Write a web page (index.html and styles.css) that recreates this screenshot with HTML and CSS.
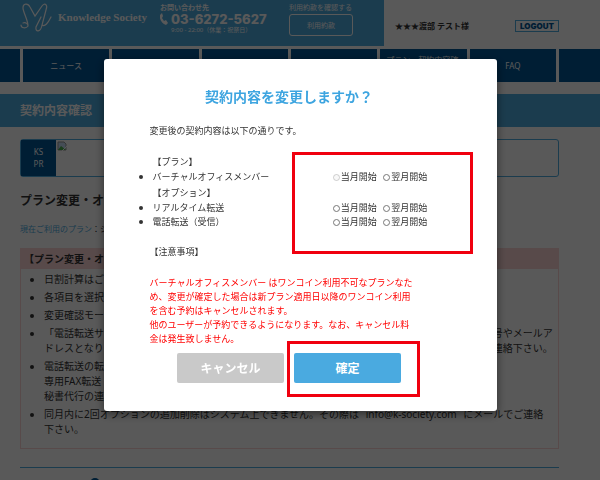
FILE: index.html
```
<!DOCTYPE html>
<html lang="ja">
<head>
  <meta charset="UTF-8" />
  <meta name="viewport" content="width=device-width, initial-scale=1.0"/>
  <title>契約内容確認 | Knowledge Society</title>
  <link rel="stylesheet" href="styles.css">
</head>
<body>

  <header class="header">
    <div class="header-main">
      <a class="logo" href="#">
        <svg width="34" height="30" viewBox="0 0 34 30" fill="none" stroke="#fff" stroke-width="1.2" stroke-linecap="round">
          <path d="M1 22c0 3 5 4 7 1C8 17 3 9 3 5c0-5 5-5 7-1l5 9 7-10c3-4 6-1 4 4l-4 15c-1 7-7 8-6 2l5-10M3 20c3-1 5 1 5 3M22 22c3 2 6-2 9-8"/>
        </svg>
        <span class="logo-text">Knowledge Society</span>
      </a>
      <div class="contact">
        <p class="contact-label">お問い合わせ先</p>
        <p class="contact-tel">
          <svg width="8" height="12" viewBox="0 0 8 12" fill="#fff"><path d="M2 0 0 2c-1 4 2 9 6 10l2-2-2-3-2 1-2-3 1-2z"/></svg>
          03-6272-5627
        </p>
        <p class="contact-hours">9:00 - 22:00（休業：祝祭日）</p>
      </div>
      <div class="terms">
        <p>利用約款を確認する</p>
        <button type="button" class="terms-btn">利用約款</button>
      </div>
    </div>
    <div class="header-user">
      <span>★★★渡部 テスト様</span>
      <a class="logout" href="#">LOGOUT</a>
    </div>
  </header>

  <nav class="nav">
    <span></span>
    <a href="#">ニュース</a>
    <a href="#"></a>
    <a href="#"></a>
    <a href="#"></a>
    <a href="#">プラン・契約内容確認</a>
    <a href="#">FAQ</a>
    <span></span>
  </nav>

  <h1 class="page-title">契約内容確認</h1>

  <main class="content">
    <div class="pr">
      <div class="pr-label">KS<br>PR</div>
      <div class="pr-body">
        <svg width="10" height="10" viewBox="0 0 10 10">
          <path d="M1 1h6l2 2v6H1z" fill="#c5dcf5" stroke="#999"/>
          <path d="M1 9l3-4 5 4z" fill="#4caf50"/>
          <path d="M5 10 10 5" stroke="#fff"/>
        </svg>
      </div>
    </div>

    <h2>プラン変更・オプション</h2>
    <p class="current"><span>現在ご利用のプラン</span>：シェア</p>

    <section class="notice">
      <h3>【プラン変更・オプション】</h3>
      <ul>
        <li>日割計算はございません。</li>
        <li>各項目を選択してください。</li>
        <li>変更確認モーダルが表示されます。</li>
        <li>「電話転送サービス」をお申込みの場合は、当社より転送先のご確認をいたします。ご登録の電話番号やメールア<br>ドレスとなりますので、変更をご希望の場合はお手数ですが下記メールアドレスまで内容を添えてご連絡下さい。</li>
        <li>電話転送の転送先<br>専用FAX転送<br>秘書代行の連絡先</li>
        <li>同月内に2回オプションの追加削除はシステム上できません。その際は <span class="mail">info@k-society.com</span> にメールでご連絡<br>下さい。</li>
      </ul>
    </section>

    <section class="step">
      <span class="step-mark"></span>
    </section>
  </main>

  <div class="overlay">
    <form class="modal">
      <h2 class="modal-title">契約内容を変更しますか？</h2>
      <p>変更後の契約内容は以下の通りです。</p>

      <div class="plans">
        <p class="plans-head">【プラン】</p>
        <ul>
          <li>
            <span class="plan-name">バーチャルオフィスメンバー</span>
            <label><input type="radio" name="plan" disabled>当月開始</label>
            <label><input type="radio" name="plan">翌月開始</label>
          </li>
        </ul>
        <p class="plans-head">【オプション】</p>
        <ul>
          <li>
            <span class="plan-name">リアルタイム転送</span>
            <label><input type="radio" name="realtime">当月開始</label>
            <label><input type="radio" name="realtime">翌月開始</label>
          </li>
          <li>
            <span class="plan-name">電話転送（受信）</span>
            <label><input type="radio" name="tel">当月開始</label>
            <label><input type="radio" name="tel">翌月開始</label>
          </li>
        </ul>
        <span class="mark mark-plans"></span>
      </div>

      <p>【注意事項】</p>
      <p class="warning">バーチャルオフィスメンバー はワンコイン利用不可なプランなた<br>め、変更が確定した場合は新プラン適用日以降のワンコイン利用<br>を含む予約はキャンセルされます。<br>他のユーザーが予約できるようになります。なお、キャンセル料<br>金は発生致しません。</p>

      <div class="buttons">
        <button type="button" class="btn btn-cancel">キャンセル</button>
        <div class="confirm">
          <button type="button" class="btn btn-confirm">確定</button>
          <span class="mark mark-confirm"></span>
        </div>
      </div>
    </form>
  </div>

</body>
</html>
```
FILE: styles.css
```
* {
  box-sizing: border-box;
}

body {
  margin: 0;
  height: 100vh;
  overflow: hidden;
  font-family: "Noto Sans", "Noto Sans CJK JP", sans-serif;
  font-size: 10px;
  line-height: 15px;
  color: #333;
  background: #fff;
}

h1, h2, h3, p, ul {
  margin: 0;
  padding: 0;
}

a {
  text-decoration: none;
}

button {
  font-family: inherit;
  padding: 0;
}

/* header */
.header {
  display: flex;
  height: 46px;
}

.header-main {
  display: flex;
  width: 64%;
  padding: 3px 0 0 20px;
  background: #4facdf;
  color: #fff;
}

.logo {
  display: flex;
  gap: 4px;
  width: 140px;
  color: #fff;
}

.logo-text {
  padding-top: 7px;
  font-family: "Liberation Serif", serif;
  font-size: 11px;
  font-weight: bold;
  white-space: nowrap;
}

.contact {
  width: 129px;
  white-space: nowrap;
}

.contact-label {
  font-size: 7px;
  font-weight: bold;
  line-height: 9px;
}

.contact-tel {
  display: flex;
  align-items: center;
  gap: 3px;
  font-family: Inter, sans-serif;
  font-size: 13px;
  font-weight: 800;
  line-height: 14px;
}

.contact-hours {
  padding-left: 11px;
  font-size: 6px;
  line-height: 8px;
}

.terms {
  font-size: 7px;
  line-height: 9px;
  white-space: nowrap;
}

.terms-btn {
  display: block;
  width: 64px;
  height: 22px;
  margin-top: 2px;
  border: 1px solid #fff;
  border-radius: 3px;
  background: none;
  color: #fff;
  font-size: 7px;
}

.header-user {
  display: flex;
  flex: 1;
  align-items: center;
  justify-content: space-between;
  padding: 5px 41px 0 11px;
  font-size: 8px;
  font-weight: bold;
}

.logout {
  width: 44px;
  border: 1px solid #4facdf;
  color: #005696;
  font-family: Inter, sans-serif;
  font-size: 8px;
  font-weight: 900;
  line-height: 10px;
  text-align: center;
}

/* nav */
.nav {
  display: grid;
  grid-template-columns: 20px repeat(6, 1fr) 41px;
  gap: 3px;
  margin-top: 3px;
  height: 33px;
}

.nav a,
.nav span {
  display: flex;
  align-items: center;
  justify-content: center;
  padding: 0 6px;
  background: #005696;
  color: #fff;
  font-size: 8px;
  line-height: 12px;
}

.page-title {
  margin-top: 12px;
  padding-left: 20px;
  background: #4facdf;
  color: #fff;
  font-size: 12px;
  line-height: 33px;
}

/* content */
.content {
  padding: 12px 41px 0 20px;
}

.pr {
  display: flex;
  height: 38px;
  border: 1px solid #4facdf;
  border-radius: 3px;
}

.pr-label {
  width: 35px;
  padding-top: 6px;
  background: #005696;
  color: #fff;
  font-size: 8px;
  line-height: 12px;
  text-align: center;
}

.pr-body {
  flex: 1;
  padding: 0 1px;
}

.content h2 {
  margin-top: 15px;
  font-size: 12px;
  line-height: 18px;
}

.current {
  margin-top: 12px;
  font-size: 8px;
  line-height: 14px;
}

.current span {
  color: #4facdf;
}

.notice {
  margin-top: 12px;
  padding-bottom: 8px;
  border: 1px solid #fcd5d5;
}

.notice h3 {
  padding-left: 3px;
  background: #fcd5d5;
  font-size: 10px;
  line-height: 20px;
}

.notice ul {
  padding: 3px 0 0 23px;
}

.notice li {
  margin-bottom: 3px;
  white-space: nowrap;
}

.mail {
  padding: 0 4px;
}

.step {
  margin-top: 18px;
  padding: 10px 0 0 70px;
  border-top: 1px solid #4facdf;
}

.step-mark {
  display: block;
  width: 10px;
  height: 10px;
  border-radius: 50%;
  background: #005696;
}

/* modal */
.overlay {
  position: fixed;
  inset: 0;
  padding-top: 59px;
  background: rgba(0, 0, 0, 0.65);
}

.modal {
  width: 90%;
  max-width: 393px;
  margin: 0 auto;
  padding: 28px 68px 28px 46px;
  border-radius: 3px;
  background: #fff;
  box-shadow: 0 3px 10px rgba(0, 0, 0, 0.5);
  font-size: 9px;
  line-height: 14px;
}

.modal-title {
  margin-bottom: 17px;
  color: #3ea5e0;
  font-size: 14px;
  line-height: 20px;
  text-align: center;
}

.plans {
  position: relative;
  margin: 17px 0;
  padding-left: 3px;
}

.plans ul + .plans-head {
  margin-top: 3px;
}

.plans li {
  height: 14px;
  white-space: nowrap;
}

.plans li::marker {
  font-size: 10px;
}

.plan-name {
  display: inline-block;
  width: 178px;
}

.plans label {
  display: inline-flex;
  align-items: center;
  gap: 1px;
  margin-right: 4px;
  vertical-align: top;
}

.plans input {
  width: 7px;
  height: 7px;
  margin: 0;
}

.warning {
  margin-top: 17px;
  color: #f00;
  white-space: nowrap;
}

.buttons {
  display: flex;
  justify-content: center;
  gap: 10px;
  margin-top: 7px;
}

.btn {
  width: 107px;
  height: 30px;
  border: none;
  border-radius: 2px;
  color: #fff;
  font-size: 12px;
  font-weight: bold;
  cursor: pointer;
}

.btn-cancel {
  background: #c9c9c9;
}

.btn-confirm {
  background: #4aaae0;
}

.confirm {
  position: relative;
}

/* red frames around the parts to check */
.mark {
  position: absolute;
  border: 3px solid #f0000f;
  pointer-events: none;
}

.mark-plans {
  top: -3px;
  right: -44px;
  width: 181px;
  height: 102px;
}

.mark-confirm {
  inset: -12px -19px -14px -7px;
}
```
